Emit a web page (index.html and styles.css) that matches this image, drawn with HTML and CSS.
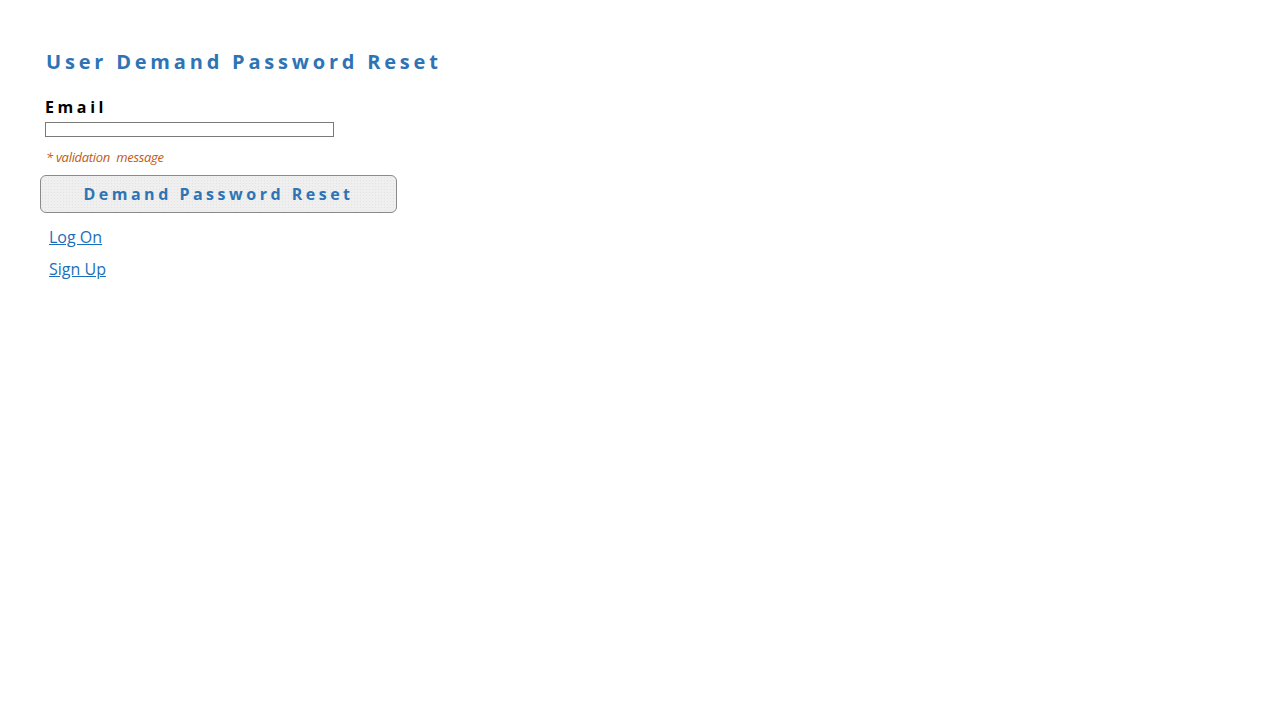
FILE: index.html
```html
<!DOCTYPE html>
<html>
<head>
<meta charset="utf-8">
<link rel="stylesheet" href="styles.css">
</head>
<body>
<div class="page">
  <h1 class="title">User Demand Password Reset</h1>
  <form class="form">
    <label class="label" for="email">Email</label>
    <input class="input" id="email" type="text">
    <div class="validation">* validation&nbsp; message</div>
    <button class="button" type="button">Demand Password Reset</button>
  </form>
  <ul class="links">
    <li><a href="#">Log On</a></li>
    <li><a href="#">Sign Up</a></li>
  </ul>
</div>
</body>
</html>
```
FILE: styles.css
```css
html, body {
  margin: 0;
  padding: 0;
  background: #ffffff;
}
body {
  font-family: "Open Sans", "Noto Sans", "DejaVu Sans", sans-serif;
}
.page {
  padding: 47px 0 0 40px;
}
.title {
  margin: 0 0 0 6px;
  font-size: 20px;
  line-height: 30px;
  font-weight: 700;
  letter-spacing: 3.8px;
  color: #2e74b5;
}
.form {
  display: flex;
  flex-direction: column;
  align-items: flex-start;
  margin-top: 20px;
}
.label {
  margin-left: 5px;
  font-size: 16px;
  line-height: 20px;
  font-weight: 700;
  letter-spacing: 3.6px;
  color: #000;
}
.input {
  margin: 5px 0 0 5px;
  width: 289px;
  height: 15px;
  box-sizing: border-box;
  border: 1px solid #7a7a7a;
  padding: 0;
  background: #fff;
}
.validation {
  margin: 11px 0 0 6px;
  font-size: 13px;
  line-height: 18px;
  font-style: italic;
  color: #c55a11;
  letter-spacing: -0.3px;
}
.button {
  margin-top: 9px;
  width: 357px;
  height: 38px;
  border: 1px solid #8a8a8a;
  border-radius: 6px;
  background-color: #efefef;
  background-image: radial-gradient(#e2e2e2 0.6px, transparent 0.8px);
  background-size: 3px 3px;
  font-family: "Open Sans", "Noto Sans", sans-serif;
  font-size: 16px;
  font-weight: 700;
  letter-spacing: 3.5px;
  color: #2e74b5;
  padding: 0;
  cursor: pointer;
}
.links {
  list-style: none;
  margin: 13px 0 0 9px;
  padding: 0;
  display: flex;
  flex-direction: column;
  gap: 10px;
}
.links li {
  font-size: 16px;
  line-height: 22px;
}
.links a {
  color: #1a6fb8;
  text-decoration: underline;
}
```
